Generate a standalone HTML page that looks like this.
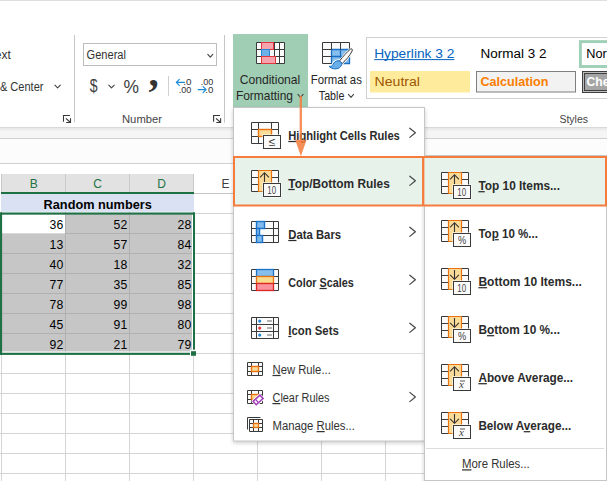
<!DOCTYPE html>
<html lang="en"><head><meta charset="utf-8"><title>Conditional Formatting - Top/Bottom Rules</title>
<style>
html,body{margin:0;padding:0;background:#fff;overflow:hidden}
svg{display:block;font-family:"Liberation Sans", sans-serif;}
text{white-space:pre}
</style></head><body>
<svg width="607" height="481" viewBox="0 0 607 481">
<defs>
<linearGradient id="rsh" x1="0" y1="0" x2="0" y2="1"><stop offset="0" stop-color="#d2d2d2"/><stop offset="0.35" stop-color="#ebebeb"/><stop offset="1" stop-color="#f6f6f6"/></linearGradient>
<filter id="msh" x="-10%" y="-10%" width="120%" height="120%"><feGaussianBlur stdDeviation="2.2"/></filter>
<clipPath id="page"><rect x="0" y="0" width="607" height="481"/></clipPath>
</defs>
<rect x="0" y="0" width="607" height="481" fill="#ffffff" />
<line x1="0" y1="0.5" x2="607" y2="0.5" stroke="#e1dfdd" stroke-width="1" />
<rect x="0" y="127" width="607" height="11" fill="#f5f5f5" />
<rect x="0" y="127" width="607" height="5" fill="url(#rsh)" />
<line x1="0" y1="138.5" x2="607" y2="138.5" stroke="#d0d0d0" stroke-width="1" />
<rect x="0" y="139" width="607" height="24" fill="#fcfcfc" />
<line x1="0" y1="163.5" x2="607" y2="163.5" stroke="#d0d0d0" stroke-width="1" />
<rect x="1" y="174" width="193" height="18" fill="#e2e2e2" />
<line x1="1.5" y1="174" x2="1.5" y2="192" stroke="#c9c9c9" stroke-width="1" />
<line x1="65.5" y1="174" x2="65.5" y2="192" stroke="#c9c9c9" stroke-width="1" />
<line x1="129.5" y1="174" x2="129.5" y2="192" stroke="#c9c9c9" stroke-width="1" />
<line x1="193.5" y1="174" x2="193.5" y2="192" stroke="#c9c9c9" stroke-width="1" />
<line x1="194" y1="193.5" x2="424" y2="193.5" stroke="#c4c4c4" stroke-width="1" />
<rect x="1" y="192" width="193" height="2" fill="#1e7145" />
<line x1="0" y1="213.5" x2="607" y2="213.5" stroke="#d5d5d5" stroke-width="1" />
<line x1="0" y1="233.5" x2="607" y2="233.5" stroke="#d5d5d5" stroke-width="1" />
<line x1="0" y1="253.5" x2="607" y2="253.5" stroke="#d5d5d5" stroke-width="1" />
<line x1="0" y1="273.5" x2="607" y2="273.5" stroke="#d5d5d5" stroke-width="1" />
<line x1="0" y1="293.5" x2="607" y2="293.5" stroke="#d5d5d5" stroke-width="1" />
<line x1="0" y1="313.5" x2="607" y2="313.5" stroke="#d5d5d5" stroke-width="1" />
<line x1="0" y1="333.5" x2="607" y2="333.5" stroke="#d5d5d5" stroke-width="1" />
<line x1="0" y1="353.5" x2="607" y2="353.5" stroke="#d5d5d5" stroke-width="1" />
<line x1="0" y1="373.5" x2="607" y2="373.5" stroke="#d5d5d5" stroke-width="1" />
<line x1="0" y1="393.5" x2="607" y2="393.5" stroke="#d5d5d5" stroke-width="1" />
<line x1="0" y1="413.5" x2="607" y2="413.5" stroke="#d5d5d5" stroke-width="1" />
<line x1="0" y1="433.5" x2="607" y2="433.5" stroke="#d5d5d5" stroke-width="1" />
<line x1="0" y1="453.5" x2="607" y2="453.5" stroke="#d5d5d5" stroke-width="1" />
<line x1="0" y1="473.5" x2="607" y2="473.5" stroke="#d5d5d5" stroke-width="1" />
<line x1="1.5" y1="194" x2="1.5" y2="481" stroke="#d5d5d5" stroke-width="1" />
<line x1="65.5" y1="194" x2="65.5" y2="481" stroke="#d5d5d5" stroke-width="1" />
<line x1="129.5" y1="194" x2="129.5" y2="481" stroke="#d5d5d5" stroke-width="1" />
<line x1="193.5" y1="194" x2="193.5" y2="481" stroke="#d5d5d5" stroke-width="1" />
<line x1="257.5" y1="194" x2="257.5" y2="481" stroke="#d5d5d5" stroke-width="1" />
<line x1="321.5" y1="194" x2="321.5" y2="481" stroke="#d5d5d5" stroke-width="1" />
<line x1="385.5" y1="194" x2="385.5" y2="481" stroke="#d5d5d5" stroke-width="1" />
<line x1="449.5" y1="194" x2="449.5" y2="481" stroke="#d5d5d5" stroke-width="1" />
<line x1="513.5" y1="194" x2="513.5" y2="481" stroke="#d5d5d5" stroke-width="1" />
<line x1="577.5" y1="194" x2="577.5" y2="481" stroke="#d5d5d5" stroke-width="1" />
<rect x="1" y="194" width="193" height="17.8" fill="#d9e1f2" />
<rect x="1" y="214" width="193" height="139" fill="#c6c6c6" />
<line x1="2" y1="233.5" x2="194" y2="233.5" stroke="#b0b0b0" stroke-width="1" />
<line x1="2" y1="253.5" x2="194" y2="253.5" stroke="#b0b0b0" stroke-width="1" />
<line x1="2" y1="273.5" x2="194" y2="273.5" stroke="#b0b0b0" stroke-width="1" />
<line x1="2" y1="293.5" x2="194" y2="293.5" stroke="#b0b0b0" stroke-width="1" />
<line x1="2" y1="313.5" x2="194" y2="313.5" stroke="#b0b0b0" stroke-width="1" />
<line x1="2" y1="333.5" x2="194" y2="333.5" stroke="#b0b0b0" stroke-width="1" />
<line x1="65.5" y1="214" x2="65.5" y2="353" stroke="#b0b0b0" stroke-width="1" />
<line x1="129.5" y1="214" x2="129.5" y2="353" stroke="#b0b0b0" stroke-width="1" />
<rect x="2" y="214.5" width="63" height="19" fill="#ffffff" />
<rect x="192" y="214.5" width="1" height="138" fill="#ffffff" />
<rect x="2" y="351.5" width="191" height="1.3" fill="#ffffff" />
<rect x="0" y="212.5" width="195" height="2.1" fill="#1e7145" />
<rect x="0" y="212.5" width="2.1" height="142.4" fill="#1e7145" />
<rect x="193" y="212.5" width="2" height="137.3" fill="#1e7145" />
<rect x="0" y="352.8" width="190" height="2.1" fill="#1e7145" />
<rect x="190" y="349.8" width="6" height="6" fill="#ffffff" />
<rect x="191" y="351.2" width="5" height="4.6" fill="#1e7145" />
<text x="33.7" y="187.7" font-size="12" fill="#217346" text-anchor="middle" >B</text>
<text x="97.5" y="187.7" font-size="12" fill="#217346" text-anchor="middle" >C</text>
<text x="161.5" y="187.7" font-size="12" fill="#217346" text-anchor="middle" >D</text>
<text x="225.5" y="187.7" font-size="12" fill="#404040" text-anchor="middle" >E</text>
<text x="43.6" y="208.8" font-size="13" fill="#000000" font-weight="bold" textLength="108.2" lengthAdjust="spacingAndGlyphs" >Random numbers</text>
<text x="49.6" y="228.8" font-size="13" fill="#000000" textLength="13.6" lengthAdjust="spacingAndGlyphs" >36</text>
<text x="113.60000000000001" y="228.8" font-size="13" fill="#000000" textLength="13.6" lengthAdjust="spacingAndGlyphs" >52</text>
<text x="177.6" y="228.8" font-size="13" fill="#000000" textLength="13.6" lengthAdjust="spacingAndGlyphs" >28</text>
<text x="49.6" y="248.8" font-size="13" fill="#000000" textLength="13.6" lengthAdjust="spacingAndGlyphs" >13</text>
<text x="113.60000000000001" y="248.8" font-size="13" fill="#000000" textLength="13.6" lengthAdjust="spacingAndGlyphs" >57</text>
<text x="177.6" y="248.8" font-size="13" fill="#000000" textLength="13.6" lengthAdjust="spacingAndGlyphs" >84</text>
<text x="49.6" y="268.8" font-size="13" fill="#000000" textLength="13.6" lengthAdjust="spacingAndGlyphs" >40</text>
<text x="113.60000000000001" y="268.8" font-size="13" fill="#000000" textLength="13.6" lengthAdjust="spacingAndGlyphs" >18</text>
<text x="177.6" y="268.8" font-size="13" fill="#000000" textLength="13.6" lengthAdjust="spacingAndGlyphs" >32</text>
<text x="49.6" y="288.8" font-size="13" fill="#000000" textLength="13.6" lengthAdjust="spacingAndGlyphs" >77</text>
<text x="113.60000000000001" y="288.8" font-size="13" fill="#000000" textLength="13.6" lengthAdjust="spacingAndGlyphs" >35</text>
<text x="177.6" y="288.8" font-size="13" fill="#000000" textLength="13.6" lengthAdjust="spacingAndGlyphs" >85</text>
<text x="49.6" y="308.8" font-size="13" fill="#000000" textLength="13.6" lengthAdjust="spacingAndGlyphs" >78</text>
<text x="113.60000000000001" y="308.8" font-size="13" fill="#000000" textLength="13.6" lengthAdjust="spacingAndGlyphs" >99</text>
<text x="177.6" y="308.8" font-size="13" fill="#000000" textLength="13.6" lengthAdjust="spacingAndGlyphs" >98</text>
<text x="49.6" y="328.8" font-size="13" fill="#000000" textLength="13.6" lengthAdjust="spacingAndGlyphs" >45</text>
<text x="113.60000000000001" y="328.8" font-size="13" fill="#000000" textLength="13.6" lengthAdjust="spacingAndGlyphs" >91</text>
<text x="177.6" y="328.8" font-size="13" fill="#000000" textLength="13.6" lengthAdjust="spacingAndGlyphs" >80</text>
<text x="49.6" y="348.8" font-size="13" fill="#000000" textLength="13.6" lengthAdjust="spacingAndGlyphs" >92</text>
<text x="113.60000000000001" y="348.8" font-size="13" fill="#000000" textLength="13.6" lengthAdjust="spacingAndGlyphs" >21</text>
<text x="177.6" y="348.8" font-size="13" fill="#000000" textLength="13.6" lengthAdjust="spacingAndGlyphs" >79</text>
<text x="10.8" y="58.8" font-size="12" fill="#333333" text-anchor="end" >Wrap Text</text>
<text x="43.5" y="90.5" font-size="12" fill="#333333" text-anchor="end" textLength="78" lengthAdjust="spacingAndGlyphs">Merge &amp; Center</text>
<path d="M54.9 85.1 L57.6 87.9 L60.300000000000004 85.1" fill="none" stroke="#444" stroke-width="1.1" stroke-linecap="round" stroke-linejoin="round"/>
<path d="M63.5 121.7 V115.5 H69.9" fill="none" stroke="#383838" stroke-width="1.1" />
<path d="M65.9 118.4 L70.5 122.5 M70.5 118.2 V122.5 H66.2" fill="none" stroke="#383838" stroke-width="1.1" />
<path d="M213.6 121.7 V115.5 H220.0" fill="none" stroke="#383838" stroke-width="1.1" />
<path d="M216.0 118.4 L220.6 122.5 M220.6 118.2 V122.5 H216.29999999999998" fill="none" stroke="#383838" stroke-width="1.1" />
<line x1="74.5" y1="35" x2="74.5" y2="122.5" stroke="#c8c6c4" stroke-width="1" />
<line x1="224.5" y1="35" x2="224.5" y2="122.5" stroke="#c8c6c4" stroke-width="1" />
<rect x="83.5" y="43.5" width="133" height="22" fill="#ffffff" stroke="#bdbdbd" stroke-width="1" />
<text x="86.6" y="59" font-size="12" fill="#333333" textLength="39.4" lengthAdjust="spacingAndGlyphs" >General</text>
<path d="M207.8 54.4 L210.3 57.199999999999996 L212.8 54.4" fill="none" stroke="#444" stroke-width="1.1" stroke-linecap="round" stroke-linejoin="round"/>
<text x="89.8" y="92" font-size="17.5" fill="#3d3d3d" textLength="7.8" lengthAdjust="spacingAndGlyphs" >$</text>
<path d="M108.8 85.05 L111.5 87.95 L114.2 85.05" fill="none" stroke="#444" stroke-width="1.1" stroke-linecap="round" stroke-linejoin="round"/>
<text x="123.5" y="92.6" font-size="19" fill="#3d3d3d" textLength="15.5" lengthAdjust="spacingAndGlyphs" >%</text>
<text x="148.6" y="86.3" font-family="Liberation Serif, serif" font-weight="bold" font-size="41" fill="#333333">,</text>
<line x1="168.5" y1="76" x2="168.5" y2="96" stroke="#d0d0d0" stroke-width="1" />
<text x="183.2" y="84.6" font-size="9.2" fill="#333333" textLength="8.2" lengthAdjust="spacingAndGlyphs" >.0</text>
<text x="178.8" y="93" font-size="9.2" fill="#333333" textLength="12.6" lengthAdjust="spacingAndGlyphs" >.00</text>
<path d="M184.5 82.3 H176.4 M179.3 79.3 L176.3 82.3 L179.3 85.3" fill="none" stroke="#1e8ad6" stroke-width="1.2" stroke-linecap="round" stroke-linejoin="round"/>
<text x="200.8" y="84.6" font-size="9.2" fill="#333333" textLength="12.5" lengthAdjust="spacingAndGlyphs" >.00</text>
<text x="205.2" y="93" font-size="9.2" fill="#333333" textLength="8.1" lengthAdjust="spacingAndGlyphs" >.0</text>
<path d="M198.2 89.6 H206 M203.1 86.6 L206.1 89.6 L203.1 92.6" fill="none" stroke="#1e8ad6" stroke-width="1.2" stroke-linecap="round" stroke-linejoin="round"/>
<text x="122" y="122.8" font-size="11.5" fill="#444" textLength="40" lengthAdjust="spacingAndGlyphs" >Number</text>
<rect x="233" y="34" width="75" height="73" fill="#a0ceb4" />
<text x="239.7" y="84.2" font-size="12.4" fill="#262626" textLength="60.6" lengthAdjust="spacingAndGlyphs" >Conditional</text>
<text x="235.9" y="99.8" font-size="12.4" fill="#262626" textLength="57.1" lengthAdjust="spacingAndGlyphs" >Formatting</text>
<path d="M297.9 94.45 L300.5 97.35000000000001 L303.1 94.45" fill="none" stroke="#444" stroke-width="1.1" stroke-linecap="round" stroke-linejoin="round"/>
<text x="310.7" y="84.2" font-size="12.4" fill="#262626" textLength="51.2" lengthAdjust="spacingAndGlyphs" >Format as</text>
<text x="318.8" y="99.8" font-size="12.4" fill="#262626" textLength="25.6" lengthAdjust="spacingAndGlyphs" >Table</text>
<path d="M348.4 94.45 L351 97.35000000000001 L353.6 94.45" fill="none" stroke="#444" stroke-width="1.1" stroke-linecap="round" stroke-linejoin="round"/>
<rect x="256.5" y="42.5" width="28" height="21" fill="#fbfbfb" />
<path d="M256.5 42.5 h28 v21 h-28z M256.5 49.5 h28 M256.5 56.5 h28 M261.5 42.5 v21 M274.5 42.5 v21 M279.5 42.5 v21" fill="none" stroke="#3a3a3a" stroke-width="1" />
<rect x="261.5" y="42.5" width="12" height="7" fill="#f5a3ad" stroke="#e2353d" stroke-width="1" />
<rect x="261.5" y="49.5" width="8" height="7" fill="#6db1ea" stroke="#2b83d4" stroke-width="1" />
<rect x="261.5" y="56.5" width="14" height="7" fill="#f5a3ad" stroke="#e2353d" stroke-width="1" />
<rect x="322.5" y="42.5" width="27" height="21" fill="#fbfbfb" />
<rect x="331.5" y="49.5" width="18" height="14" fill="#86beec" />
<path d="M331.5 49.5 h18 v14 h-18z M340.5 49.5 v14 M331.5 56.5 h18" fill="none" stroke="#1a6fc4" stroke-width="1.3" />
<path d="M322.5 42.5 h27 v7 M322.5 42.5 v21 h9 M331.5 42.5 v7 M340.5 42.5 v7 M322.5 49.5 h9 M322.5 56.5 h9" fill="none" stroke="#3a3a3a" stroke-width="1" />
<path d="M339.2 61.3 C343 56.5 347.5 51.5 350.6 49 C352 48.3 352.7 49.5 352.1 51 C350 55.5 346 60 342.3 63.4 Z" fill="#ffffff" stroke="#ffffff" stroke-width="2.2" />
<path d="M338.8 60.6 C336 60.8 333.7 62.2 333 64.5 C332.6 65.8 331.2 66.5 329 66.4 C331.5 68.7 335 69.5 337.9 68.5 C340.4 67.6 342 65.4 341.9 63.1 Z" fill="#ffffff" stroke="#ffffff" stroke-width="2.6" />
<path d="M339.2 61.3 C343 56.5 347.5 51.5 350.6 49 C352 48.3 352.7 49.5 352.1 51 C350 55.5 346 60 342.3 63.4 Z" fill="#fafafa" stroke="#3a3a3a" stroke-width="1" />
<path d="M338.8 60.6 C336 60.8 333.7 62.2 333 64.5 C332.6 65.8 331.2 66.5 329 66.4 C331.5 68.7 335 69.5 337.9 68.5 C340.4 67.6 342 65.4 341.9 63.1 Z" fill="#6aaee8" stroke="#1a6fc4" stroke-width="1" />
<rect x="366.5" y="37.5" width="250" height="61" fill="#ffffff" stroke="#d0d0d0" stroke-width="1" />
<text x="374.2" y="57.6" font-size="12.5" fill="#0563c1" textLength="80.2" lengthAdjust="spacingAndGlyphs" >Hyperlink 3 2</text>
<line x1="374.2" y1="59.6" x2="454.4" y2="59.6" stroke="#0563c1" stroke-width="1" />
<text x="480.5" y="57.6" font-size="12.5" fill="#000" textLength="65.9" lengthAdjust="spacingAndGlyphs" >Normal 3 2</text>
<rect x="580.4" y="41.6" width="40" height="24.9" fill="#ffffff" stroke="#9fd0b7" stroke-width="2.9" />
<text x="586.3" y="57.6" font-size="12.5" fill="#000" textLength="41" lengthAdjust="spacingAndGlyphs">Normal</text>
<rect x="370" y="71" width="100" height="21.5" fill="#ffeb9c" />
<text x="374.6" y="85.8" font-size="12.5" fill="#9c5700" textLength="45.4" lengthAdjust="spacingAndGlyphs" >Neutral</text>
<rect x="476.5" y="71.5" width="99" height="20.5" fill="#f2f2f2" stroke="#7f7f7f" stroke-width="1" />
<text x="480.5" y="85.8" font-size="12.5" fill="#fa7d00" font-weight="bold" textLength="67.9" lengthAdjust="spacingAndGlyphs" >Calculation</text>
<rect x="582.5" y="71.5" width="40" height="21" fill="#bdbdbd" stroke="#3f3f3f" stroke-width="1" />
<rect x="584.5" y="73.5" width="40" height="17" fill="#a5a5a5" stroke="#3f3f3f" stroke-width="1" />
<text x="586.5" y="85.8" font-size="12.5" fill="#ffffff" font-weight="bold" textLength="62" lengthAdjust="spacingAndGlyphs">Check Cell</text>
<text x="559.4" y="122.7" font-size="11.5" fill="#444" textLength="28.6" lengthAdjust="spacingAndGlyphs" >Styles</text>
<rect x="233" y="109" width="192" height="334" fill="#000000" opacity="0.2" filter="url(#msh)"/>
<rect x="233.5" y="107.5" width="191" height="333.5" fill="#ffffff" stroke="#c6c6c6" stroke-width="1" />
<rect x="424" y="161" width="183" height="330" fill="#000000" opacity="0.2" filter="url(#msh)"/>
<rect x="424.5" y="155.5" width="182" height="325" fill="#ffffff" stroke="#c6c6c6" stroke-width="1" />
<rect x="234" y="157" width="372" height="48.5" fill="#e6f2ea" />
<rect x="251.5" y="122.5" width="27" height="21" fill="#fbfbfb" />
<path d="M251.5 122.5 h27 v21 h-27z M258.5 122.5 v21 M271.5 122.5 v21 M251.5 129.5 h27 M251.5 136.5 h27" fill="none" stroke="#3a3a3a" stroke-width="1" />
<rect x="258.5" y="129.5" width="13" height="7" fill="#fadb97" stroke="#e8730f" stroke-width="1.4" />
<rect x="262.5" y="134.5" width="19" height="15" fill="#ffffff" />
<rect x="263.5" y="135.5" width="17" height="13" fill="#fbfbfb" stroke="#3a3a3a" stroke-width="1" />
<text x="272.1" y="146.1" font-size="12" fill="#3a3a3a" text-anchor="middle" >≤</text>
<rect x="251.5" y="170.5" width="27" height="21" fill="#fbfbfb" />
<path d="M251.5 170.5 h27 v21 h-27z M258.5 170.5 v21 M271.5 170.5 v21 M251.5 177.5 h27 M251.5 184.5 h27" fill="none" stroke="#3a3a3a" stroke-width="1" />
<rect x="258.5" y="170.5" width="13" height="21" fill="#fadb97" />
<path d="M258.5 170.5 v21 M271.5 170.5 v21 M258.5 170.5 h13 M258.5 191.5 h13" fill="none" stroke="#e8730f" stroke-width="1.2" />
<path d="M264.5 182.0 V172.7 M260.1 177.3 L264.5 172.7 L268.9 177.3" fill="none" stroke="#333" stroke-width="1.1" />
<rect x="262.5" y="182.5" width="19" height="15" fill="#ffffff" />
<rect x="263.5" y="183.5" width="17" height="13" fill="#fbfbfb" stroke="#3a3a3a" stroke-width="1" />
<text x="267.3" y="193.6" font-size="11" fill="#444" textLength="8.8" lengthAdjust="spacingAndGlyphs" >10</text>
<rect x="251.5" y="221.5" width="27" height="21" fill="#fbfbfb" />
<path d="M251.5 221.5 h27 v21 h-27z M256.5 221.5 v21 M273.5 221.5 v21 M251.5 228.5 h27 M251.5 235.5 h27" fill="none" stroke="#3a3a3a" stroke-width="1" />
<rect x="256.5" y="221.5" width="8" height="7" fill="#80bbee" stroke="#1a73c8" stroke-width="1.4" />
<rect x="256.5" y="228.5" width="3" height="7" fill="#80bbee" stroke="#1a73c8" stroke-width="1.4" />
<rect x="256.5" y="235.5" width="6" height="7" fill="#80bbee" stroke="#1a73c8" stroke-width="1.4" />
<rect x="251.5" y="269.5" width="27" height="21" fill="#fbfbfb" />
<path d="M251.5 269.5 h27 v21 h-27z M256.5 269.5 v21 M273.5 269.5 v21 M251.5 276.5 h27 M251.5 283.5 h27" fill="none" stroke="#3a3a3a" stroke-width="1" />
<rect x="256.5" y="269.5" width="17" height="7" fill="#86beec" stroke="#1a73c8" stroke-width="1.3" />
<rect x="256.5" y="276.5" width="17" height="7" fill="#f9db8e" stroke="#e8730f" stroke-width="1.3" />
<rect x="256.5" y="283.5" width="17" height="7" fill="#fb919b" stroke="#df2626" stroke-width="1.3" />
<rect x="251.5" y="317.5" width="27" height="21" fill="#fbfbfb" />
<path d="M251.5 317.5 h27 v21 h-27z M256.5 317.5 v21 M273.5 317.5 v21 M251.5 324.5 h27 M251.5 331.5 h27" fill="none" stroke="#3a3a3a" stroke-width="1" />
<circle cx="259.7" cy="321.1" r="1.55" fill="#1f85d8"/>
<line x1="267.1" y1="321.0" x2="271.9" y2="321.0" stroke="#666" stroke-width="1" />
<circle cx="259.7" cy="328.1" r="1.55" fill="#e8343c"/>
<line x1="267.1" y1="328.0" x2="271.9" y2="328.0" stroke="#666" stroke-width="1" />
<circle cx="259.7" cy="335.1" r="1.55" fill="#1f85d8"/>
<line x1="267.1" y1="335.0" x2="271.9" y2="335.0" stroke="#666" stroke-width="1" />
<text x="288.3" y="139.9" font-size="12.3" fill="#2b2b2b" font-weight="bold" textLength="111.5" lengthAdjust="spacingAndGlyphs" ><tspan text-decoration="underline">H</tspan>ighlight Cells Rules</text>
<path d="M409.8 128.20000000000002 L415.40000000000003 132.8 L409.8 137.4" fill="none" stroke="#444" stroke-width="1.15" stroke-linecap="round" stroke-linejoin="round"/>
<text x="288.3" y="187.9" font-size="12.3" fill="#2b2b2b" font-weight="bold" textLength="101.5" lengthAdjust="spacingAndGlyphs" ><tspan text-decoration="underline">T</tspan>op/Bottom Rules</text>
<path d="M409.8 176.20000000000002 L415.40000000000003 180.8 L409.8 185.4" fill="none" stroke="#444" stroke-width="1.15" stroke-linecap="round" stroke-linejoin="round"/>
<text x="288.3" y="238.9" font-size="12.3" fill="#2b2b2b" font-weight="bold" textLength="52.8" lengthAdjust="spacingAndGlyphs" ><tspan text-decoration="underline">D</tspan>ata Bars</text>
<path d="M409.8 227.20000000000002 L415.40000000000003 231.8 L409.8 236.4" fill="none" stroke="#444" stroke-width="1.15" stroke-linecap="round" stroke-linejoin="round"/>
<text x="288.3" y="286.9" font-size="12.3" fill="#2b2b2b" font-weight="bold" textLength="65.5" lengthAdjust="spacingAndGlyphs" >Color <tspan text-decoration="underline">S</tspan>cales</text>
<path d="M409.8 275.2 L415.40000000000003 279.8 L409.8 284.40000000000003" fill="none" stroke="#444" stroke-width="1.15" stroke-linecap="round" stroke-linejoin="round"/>
<text x="288.3" y="334.9" font-size="12.3" fill="#2b2b2b" font-weight="bold" textLength="50.5" lengthAdjust="spacingAndGlyphs" ><tspan text-decoration="underline">I</tspan>con Sets</text>
<path d="M409.8 323.2 L415.40000000000003 327.8 L409.8 332.40000000000003" fill="none" stroke="#444" stroke-width="1.15" stroke-linecap="round" stroke-linejoin="round"/>
<line x1="234" y1="353.5" x2="424" y2="353.5" stroke="#dcdcdc" stroke-width="1" />
<rect x="247.5" y="362.5" width="15" height="13" fill="#fbfbfb" />
<path d="M247.5 362.5 h15 v13 h-15z M251.5 362.5 v13 M258.5 362.5 v13 M247.5 366.5 h15 M247.5 371.5 h15" fill="none" stroke="#3a3a3a" stroke-width="1" />
<rect x="251.5" y="366.5" width="7" height="5" fill="#fadb97" stroke="#e8730f" stroke-width="1.4" />
<rect x="247.5" y="390.5" width="15" height="13" fill="#fbfbfb" />
<path d="M247.5 390.5 h15 v13 h-15z M251.5 390.5 v13 M258.5 390.5 v13 M247.5 394.5 h15 M247.5 399.5 h15" fill="none" stroke="#3a3a3a" stroke-width="1" />
<rect x="251.5" y="394.5" width="7" height="5" fill="#fadb97" stroke="#e8730f" stroke-width="1.4" />
<g transform="translate(258.1 399.9) rotate(-42)"><rect x="-6" y="-3.8" width="12" height="7.6" fill="#ffffff"/><rect x="-4.6" y="-2.3" width="9.2" height="4.6" fill="#ffffff" stroke="#a33ab6" stroke-width="1.5"/><line x1="-1.6" y1="-2.3" x2="-1.6" y2="2.3" stroke="#a33ab6" stroke-width="1.2"/></g>
<path d="M247.5 429.5 V417.5 H260.5" fill="none" stroke="#3a3a3a" stroke-width="1" />
<rect x="249.5" y="419.5" width="13" height="12" fill="#fbfbfb" />
<path d="M249.5 419.5 h13 v12 h-13z M253.5 419.5 v12 M258.5 419.5 v12 M249.5 423.5 h13 M249.5 427.5 h13" fill="none" stroke="#3a3a3a" stroke-width="1" />
<rect x="253.5" y="423.5" width="5" height="4" fill="#fadb97" stroke="#e8730f" stroke-width="1.3" />
<text x="272.5" y="373.9" font-size="12.3" fill="#333" textLength="58.3" lengthAdjust="spacingAndGlyphs" ><tspan text-decoration="underline">N</tspan>ew Rule...</text>
<text x="272.5" y="402" font-size="12.3" fill="#333" textLength="57.0" lengthAdjust="spacingAndGlyphs" ><tspan text-decoration="underline">C</tspan>lear Rules</text>
<text x="272.5" y="430" font-size="12.3" fill="#333" textLength="82.4" lengthAdjust="spacingAndGlyphs" >Manage <tspan text-decoration="underline">R</tspan>ules...</text>
<path d="M409.8 392.4 L415.40000000000003 397 L409.8 401.6" fill="none" stroke="#444" stroke-width="1.15" stroke-linecap="round" stroke-linejoin="round"/>
<rect x="441.5" y="172.5" width="27" height="21" fill="#fbfbfb" />
<path d="M441.5 172.5 h27 v21 h-27z M448.5 172.5 v21 M461.5 172.5 v21 M441.5 179.5 h27 M441.5 186.5 h27" fill="none" stroke="#3a3a3a" stroke-width="1" />
<rect x="448.5" y="172.5" width="13" height="21" fill="#fadb97" />
<path d="M448.5 172.5 v21 M461.5 172.5 v21 M448.5 172.5 h13 M448.5 193.5 h13" fill="none" stroke="#e8730f" stroke-width="1.2" />
<path d="M454.5 184.0 V174.7 M450.1 179.3 L454.5 174.7 L458.9 179.3" fill="none" stroke="#333" stroke-width="1.1" />
<rect x="452.5" y="184.5" width="19" height="15" fill="#ffffff" />
<rect x="453.5" y="185.5" width="17" height="13" fill="#fbfbfb" stroke="#3a3a3a" stroke-width="1" />
<text x="457.3" y="195.6" font-size="11" fill="#444" textLength="8.8" lengthAdjust="spacingAndGlyphs" >10</text>
<text x="478.4" y="190.1" font-size="12.3" fill="#2b2b2b" font-weight="bold" textLength="81.6" lengthAdjust="spacingAndGlyphs" ><tspan text-decoration="underline">T</tspan>op 10 Items...</text>
<rect x="441.5" y="220.5" width="27" height="21" fill="#fbfbfb" />
<path d="M441.5 220.5 h27 v21 h-27z M448.5 220.5 v21 M461.5 220.5 v21 M441.5 227.5 h27 M441.5 234.5 h27" fill="none" stroke="#3a3a3a" stroke-width="1" />
<rect x="448.5" y="220.5" width="13" height="21" fill="#fadb97" />
<path d="M448.5 220.5 v21 M461.5 220.5 v21 M448.5 220.5 h13 M448.5 241.5 h13" fill="none" stroke="#e8730f" stroke-width="1.2" />
<path d="M454.5 232.0 V222.7 M450.1 227.3 L454.5 222.7 L458.9 227.3" fill="none" stroke="#333" stroke-width="1.1" />
<rect x="452.5" y="232.5" width="19" height="15" fill="#ffffff" />
<rect x="453.5" y="233.5" width="17" height="13" fill="#fbfbfb" stroke="#3a3a3a" stroke-width="1" />
<text x="457.9" y="243.6" font-size="10.8" fill="#444" textLength="8.2" lengthAdjust="spacingAndGlyphs" >%</text>
<text x="478.4" y="238.1" font-size="12.3" fill="#2b2b2b" font-weight="bold" textLength="59.6" lengthAdjust="spacingAndGlyphs" >To<tspan text-decoration="underline">p</tspan> 10 %...</text>
<rect x="441.5" y="268.5" width="27" height="21" fill="#fbfbfb" />
<path d="M441.5 268.5 h27 v21 h-27z M448.5 268.5 v21 M461.5 268.5 v21 M441.5 275.5 h27 M441.5 282.5 h27" fill="none" stroke="#3a3a3a" stroke-width="1" />
<rect x="448.5" y="268.5" width="13" height="21" fill="#fadb97" />
<path d="M448.5 268.5 v21 M461.5 268.5 v21 M448.5 268.5 h13 M448.5 289.5 h13" fill="none" stroke="#e8730f" stroke-width="1.2" />
<path d="M454.5 270.0 V279.3 M450.1 274.8 L454.5 279.3 L458.9 274.8" fill="none" stroke="#333" stroke-width="1.1" />
<rect x="452.5" y="280.5" width="19" height="15" fill="#ffffff" />
<rect x="453.5" y="281.5" width="17" height="13" fill="#fbfbfb" stroke="#3a3a3a" stroke-width="1" />
<text x="457.3" y="291.6" font-size="11" fill="#444" textLength="8.8" lengthAdjust="spacingAndGlyphs" >10</text>
<text x="478.4" y="286.1" font-size="12.3" fill="#2b2b2b" font-weight="bold" textLength="103.5" lengthAdjust="spacingAndGlyphs" ><tspan text-decoration="underline">B</tspan>ottom 10 Items...</text>
<rect x="441.5" y="316.5" width="27" height="21" fill="#fbfbfb" />
<path d="M441.5 316.5 h27 v21 h-27z M448.5 316.5 v21 M461.5 316.5 v21 M441.5 323.5 h27 M441.5 330.5 h27" fill="none" stroke="#3a3a3a" stroke-width="1" />
<rect x="448.5" y="316.5" width="13" height="21" fill="#fadb97" />
<path d="M448.5 316.5 v21 M461.5 316.5 v21 M448.5 316.5 h13 M448.5 337.5 h13" fill="none" stroke="#e8730f" stroke-width="1.2" />
<path d="M454.5 318.0 V327.3 M450.1 322.8 L454.5 327.3 L458.9 322.8" fill="none" stroke="#333" stroke-width="1.1" />
<rect x="452.5" y="328.5" width="19" height="15" fill="#ffffff" />
<rect x="453.5" y="329.5" width="17" height="13" fill="#fbfbfb" stroke="#3a3a3a" stroke-width="1" />
<text x="457.9" y="339.6" font-size="10.8" fill="#444" textLength="8.2" lengthAdjust="spacingAndGlyphs" >%</text>
<text x="478.4" y="334.1" font-size="12.3" fill="#2b2b2b" font-weight="bold" textLength="81.6" lengthAdjust="spacingAndGlyphs" >B<tspan text-decoration="underline">o</tspan>ttom 10 %...</text>
<rect x="441.5" y="364.5" width="27" height="21" fill="#fbfbfb" />
<path d="M441.5 364.5 h27 v21 h-27z M448.5 364.5 v21 M461.5 364.5 v21 M441.5 371.5 h27 M441.5 378.5 h27" fill="none" stroke="#3a3a3a" stroke-width="1" />
<rect x="448.5" y="364.5" width="13" height="21" fill="#fadb97" />
<path d="M448.5 364.5 v21 M461.5 364.5 v21 M448.5 364.5 h13 M448.5 385.5 h13" fill="none" stroke="#e8730f" stroke-width="1.2" />
<path d="M454.5 376.0 V366.7 M450.1 371.3 L454.5 366.7 L458.9 371.3" fill="none" stroke="#333" stroke-width="1.1" />
<rect x="452.5" y="376.5" width="19" height="15" fill="#ffffff" />
<rect x="453.5" y="377.5" width="17" height="13" fill="#fbfbfb" stroke="#3a3a3a" stroke-width="1" />
<text x="458.9" y="388.1" font-size="11" font-style="italic" font-family="Liberation Serif, serif" fill="#444">x</text>
<line x1="460.0" y1="381.0" x2="465.1" y2="381.0" stroke="#444" stroke-width="0.9" />
<text x="478.4" y="382.1" font-size="12.3" fill="#2b2b2b" font-weight="bold" textLength="94.7" lengthAdjust="spacingAndGlyphs" ><tspan text-decoration="underline">A</tspan>bove Average...</text>
<rect x="441.5" y="412.5" width="27" height="21" fill="#fbfbfb" />
<path d="M441.5 412.5 h27 v21 h-27z M448.5 412.5 v21 M461.5 412.5 v21 M441.5 419.5 h27 M441.5 426.5 h27" fill="none" stroke="#3a3a3a" stroke-width="1" />
<rect x="448.5" y="412.5" width="13" height="21" fill="#fadb97" />
<path d="M448.5 412.5 v21 M461.5 412.5 v21 M448.5 412.5 h13 M448.5 433.5 h13" fill="none" stroke="#e8730f" stroke-width="1.2" />
<path d="M454.5 414.0 V423.3 M450.1 418.8 L454.5 423.3 L458.9 418.8" fill="none" stroke="#333" stroke-width="1.1" />
<rect x="452.5" y="424.5" width="19" height="15" fill="#ffffff" />
<rect x="453.5" y="425.5" width="17" height="13" fill="#fbfbfb" stroke="#3a3a3a" stroke-width="1" />
<text x="458.9" y="436.1" font-size="11" font-style="italic" font-family="Liberation Serif, serif" fill="#444">x</text>
<line x1="460.0" y1="429.0" x2="465.1" y2="429.0" stroke="#444" stroke-width="0.9" />
<text x="478.4" y="430.1" font-size="12.3" fill="#2b2b2b" font-weight="bold" textLength="92.9" lengthAdjust="spacingAndGlyphs" >Below A<tspan text-decoration="underline">v</tspan>erage...</text>
<line x1="426" y1="448.5" x2="604" y2="448.5" stroke="#dcdcdc" stroke-width="1" />
<text x="462" y="468.3" font-size="12.3" fill="#333" textLength="67.8" lengthAdjust="spacingAndGlyphs" ><tspan text-decoration="underline">M</tspan>ore Rules...</text>
<rect x="234" y="157" width="372" height="48.5" fill="none" stroke="#f57c3c" stroke-width="2" />
<line x1="423.2" y1="157" x2="423.2" y2="205.5" stroke="#f57c3c" stroke-width="2.3" />
<g opacity="0.86">
<line x1="300.8" y1="95.8" x2="300.8" y2="141" stroke="#f57c3c" stroke-width="2.3" />
<path d="M295.2 139.8 L306.6 139.8 L300.9 156.2z" fill="#f57c3c" />
</g>
</svg>
</body></html>
